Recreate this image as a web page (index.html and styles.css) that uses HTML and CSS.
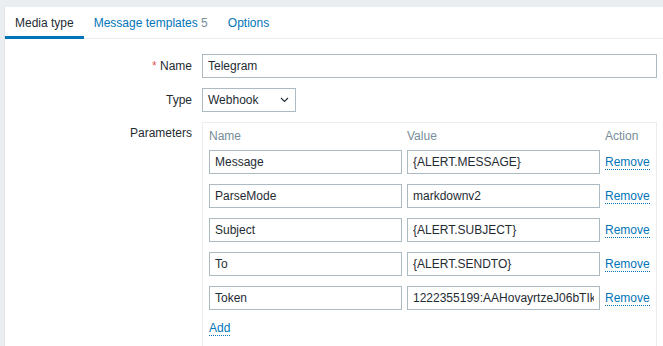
FILE: index.html
```html
<!DOCTYPE html>
<html lang="en">
<head>
  <title>Media types</title>
  <meta charset="utf-8">
  <link rel="stylesheet" href="styles.css">
</head>
<body>
  <div class="panel">
    <ul class="tabs">
      <li class="tab tab-active">Media type</li>
      <li class="tab"><a href="#">Message templates</a> <span class="tab-count">5</span></li>
      <li class="tab"><a href="#">Options</a></li>
    </ul>

    <form class="form">
      <label class="form-label"><span class="required">*</span> Name</label>
      <div class="form-field">
        <input class="input input-wide" type="text" value="Telegram">
      </div>

      <label class="form-label">Type</label>
      <div class="form-field">
        <div class="select">
          <span>Webhook</span>
          <svg class="select-arrow" width="9" height="6" viewBox="0 0 9 6">
            <path d="M1 1 L4.5 4.5 L8 1" fill="none" stroke="#1f2c33" stroke-width="1.1"/>
          </svg>
        </div>
      </div>

      <label class="form-label form-label-top">Parameters</label>
      <div class="form-field">
        <div class="params">
          <div class="params-row params-head">
            <span>Name</span>
            <span>Value</span>
            <span>Action</span>
          </div>
          <div class="params-row">
            <input class="input" type="text" value="Message">
            <input class="input" type="text" value="{ALERT.MESSAGE}">
            <a class="link" href="#">Remove</a>
          </div>
          <div class="params-row">
            <input class="input" type="text" value="ParseMode">
            <input class="input" type="text" value="markdownv2">
            <a class="link" href="#">Remove</a>
          </div>
          <div class="params-row">
            <input class="input" type="text" value="Subject">
            <input class="input" type="text" value="{ALERT.SUBJECT}">
            <a class="link" href="#">Remove</a>
          </div>
          <div class="params-row">
            <input class="input" type="text" value="To">
            <input class="input" type="text" value="{ALERT.SENDTO}">
            <a class="link" href="#">Remove</a>
          </div>
          <div class="params-row">
            <input class="input" type="text" value="Token">
            <input class="input" type="text" value="1222355199:AAHovayrtzeJ06bTIkEwV3c8d2yPr7Ym5Q">
            <a class="link" href="#">Remove</a>
          </div>
          <div class="params-add">
            <a class="link" href="#">Add</a>
          </div>
        </div>
      </div>
    </form>
  </div>
</body>
</html>
```

FILE: styles.css
```css
*, *::before, *::after {
  box-sizing: border-box;
}

body {
  margin: 0;
  padding: 7px 0 0 4px;
  background-color: #ebeef0;
  color: #1f2c33;
  font-family: "Liberation Sans", Arial, sans-serif;
  font-size: 12px;
  line-height: 16px;
}

.panel {
  min-height: 339px;
  background-color: #ffffff;
  border-left: 1px solid #dfe4e7;
}

.tabs {
  display: flex;
  margin: 0;
  padding: 0;
  list-style: none;
  border-bottom: 1px solid #ebeef0;
}

.tab {
  padding: 8px 10px 5px;
  margin-bottom: -1px;
  border-bottom: 3px solid transparent;
}

.tab a {
  color: #0275b8;
  text-decoration: none;
}

.tab-active {
  border-bottom-color: #0275b8;
}

.tab-count {
  color: #768d99;
}

.form {
  display: grid;
  grid-template-columns: 187px 1fr;
  column-gap: 10px;
  row-gap: 10px;
  padding: 15px 8px 0 0;
}

.form-label {
  text-align: right;
  line-height: 24px;
}

.form-label-top {
  line-height: 22px;
}

.required {
  color: #e45959;
}

.input {
  height: 24px;
  padding: 0 5px;
  border: 1px solid #acbbc2;
  border-radius: 0;
  background-color: #ffffff;
  color: #1f2c33;
  font-family: inherit;
  font-size: 12px;
  outline: none;
}

.input-wide {
  width: 100%;
}

.select {
  display: flex;
  align-items: center;
  justify-content: space-between;
  width: 94px;
  height: 24px;
  padding: 0 5px;
  border: 1px solid #acbbc2;
}

.select-arrow {
  margin-right: 1px;
}

.params {
  padding: 5px 6px 12px;
  border: 1px solid #ebeef0;
  border-bottom: none;
  min-height: 230px;
}

.params-row {
  display: grid;
  grid-template-columns: 193px 193px auto;
  column-gap: 5px;
  align-items: center;
  margin-bottom: 10px;
}

.params-head {
  margin-bottom: 6px;
  color: #768d99;
}

.params-row .input {
  width: 100%;
}

.link {
  justify-self: start;
  color: #0275b8;
  text-decoration: none;
  border-bottom: 1px dotted #0275b8;
  line-height: 14px;
}

.params-add {
  padding-top: 0;
}
```
